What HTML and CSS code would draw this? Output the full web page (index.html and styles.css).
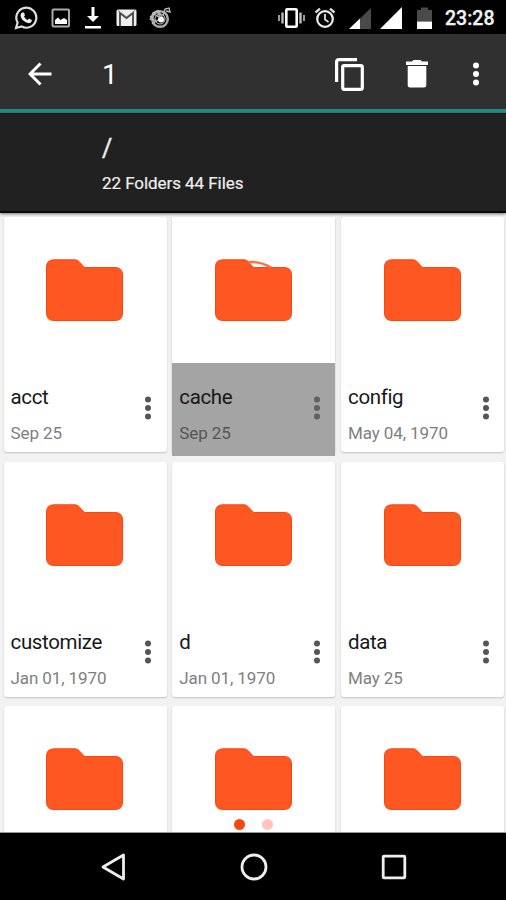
FILE: index.html
```html
<!DOCTYPE html>
<html lang="en">
<head>
<meta charset="utf-8">
<title>Files</title>
<link rel="stylesheet" href="styles.css">
</head>
<body>
<svg class="defs" aria-hidden="true">
  <symbol id="folder" viewBox="0 0 77 62"><path fill="#ff5722" stroke="#fa4710" d="M8 .8H29Q31.500 .8 33 2.500L38.500 8.500H69Q76.500 8.500 76.500 16V54Q76.500 61.500 69 61.500H8Q.5 61.500 .5 54V8Q.5 .8 8 .8Z"/></symbol>
  <symbol id="dots" viewBox="0 0 8 24"><circle cx="4" cy="3.500" r="3"/><circle cx="4" cy="12" r="3"/><circle cx="4" cy="20.500" r="3"/></symbol>
</svg>
<div class="screen">
  <div class="status">
    <div class="notifications">
      <svg width="24" height="24" viewBox="0 0 24 24"><path d="M2 22L3.600 16.600A10 10 0 1 1 7.600 20.500Z" fill="none" stroke="#ddd" stroke-width="2.200"/><path d="M8 6.500L10 6.500L11 9.300L10 10.600Q11.200 13 13.700 14L15 12.600L17.800 14Q17.700 17.200 14.600 17.200Q7.200 15.600 6.500 9.500Q6.500 7.500 8 6.500Z" fill="#eee"/></svg>
      <svg width="20" height="20" viewBox="0 0 20 20"><rect x="1.500" y="1.500" width="16.500" height="17" rx="1" fill="none" stroke="#aaa" stroke-width="2"/><path d="M4 16V12L7 9.500L9.500 12L13 10L16 12V16Z" fill="#fff"/></svg>
      <svg width="18" height="24" viewBox="0 0 18 24"><path d="M7.500 1H10.500V10H15L9 16L3 10H7.500ZM1 20H17V22.500H1Z" fill="#fff"/></svg>
      <svg width="21" height="18" viewBox="0 0 21 18"><rect x=".5" y=".5" width="20" height="16.500" rx="1.500" fill="#eee"/><path d="M4 17V4L10.500 9L17 4V17" fill="none" stroke="#444" stroke-width="1.800"/><path d="M2 1.500L10.500 8L19 1.500" fill="none" stroke="#777"/></svg>
      <svg width="22" height="24" viewBox="0 0 22 24"><circle cx="11" cy="13" r="7.800" fill="none" stroke="#aaa" stroke-width="2.500"/><circle cx="11" cy="13" r="5" fill="none" stroke="#ccc" stroke-width="1"/><circle cx="12" cy="13.500" r="3" fill="#fff"/><path d="M1 14L4 7L11 12M4 7L8 5L11 11M9 4L13 11M14 10L16 3L20 2L21 6L17 5M1 10L7 16M3 18L9 14" fill="none" stroke="#bbb" stroke-width="1.400"/></svg>
    </div>
    <div class="system">
      <svg width="27" height="22" viewBox="0 0 27 22"><rect x="8.300" y="2.300" width="10.400" height="17.400" rx="1" fill="none" stroke="#fff" stroke-width="2.600"/><path d="M4.500 5.500V16.500M22.500 5.500V16.500" stroke="#bbb" stroke-width="2.400"/><path d="M1 8V14M26 8V14" stroke="#999" stroke-width="2"/></svg>
      <svg width="22" height="22" viewBox="0 0 22 22"><circle cx="11" cy="12" r="7.800" fill="none" stroke="#eee" stroke-width="2.200"/><path d="M1.500 5.500L6 1.700M20.500 5.500L16 1.700" stroke="#ddd" stroke-width="2.300"/><path d="M11 7V12.500L14.500 15" fill="none" stroke="#ddd" stroke-width="1.800"/></svg>
      <svg width="22" height="21" viewBox="0 0 22 21"><path d="M0 21L22 0V21Z" fill="#4a4a4a"/><path d="M0 21L11 10.500V21Z" fill="#fff"/></svg>
      <svg width="22" height="22" viewBox="0 0 22 22"><path d="M0 22L22 0V22Z" fill="#fff"/></svg>
      <svg width="15" height="22" viewBox="0 0 15 22"><path d="M0 3H4V.5H11V3H15V14.500H0Z" fill="#4a4a4a"/><path d="M0 14.500H15V22H0Z" fill="#fff"/></svg>
      <span class="clock">23:28</span>
    </div>
  </div>
  <div class="toolbar">
    <svg class="back" width="24" height="24" viewBox="0 0 24 24"><path d="M23.500 12H2M12.500 1.500L2 12L12.500 22.500" fill="none" stroke="#fff" stroke-width="3"/></svg>
    <span class="count">1</span>
    <svg class="copy" width="29" height="33" viewBox="0 0 29 33"><path d="M1.600 24V4Q1.600 1.600 4 1.600H22" fill="none" stroke="#fff" stroke-width="3.200"/><rect x="7.700" y="7.700" width="19.600" height="23.600" rx="1.500" fill="none" stroke="#fff" stroke-width="3.200"/></svg>
    <svg class="trash" width="22" height="28" viewBox="0 0 22 28"><path d="M0 1.500H6L7.500 0H14.500L16 1.500H22V5H0ZM1.700 6H20.300V25Q20.300 27.500 17.800 27.500H4.200Q1.700 27.500 1.700 25Z" fill="#fff"/></svg>
    <svg class="more" width="8" height="24"><use href="#dots"/></svg>
  </div>
  <div class="path"><div class="slash">/</div><div class="summary">22 Folders 44 Files</div></div>
  <div class="files">
    <div class="grid">
      <div class="card"><svg class="folder"><use href="#folder"/></svg><div class="info"><div><div class="name">acct</div><div class="date">Sep 25</div></div><svg class="menu"><use href="#dots"/></svg></div></div>
      <div class="card selected"><svg class="folder" viewBox="0 0 77 62"><use href="#folder"/><path d="M33 3.200Q45 2 56 8.500" fill="none" stroke="#ff7043" stroke-width="2.400"/></svg><div class="info"><div><div class="name">cache</div><div class="date">Sep 25</div></div><svg class="menu"><use href="#dots"/></svg></div></div>
      <div class="card"><svg class="folder"><use href="#folder"/></svg><div class="info"><div><div class="name">config</div><div class="date">May 04, 1970</div></div><svg class="menu"><use href="#dots"/></svg></div></div>
      <div class="card"><svg class="folder"><use href="#folder"/></svg><div class="info"><div><div class="name">customize</div><div class="date">Jan 01, 1970</div></div><svg class="menu"><use href="#dots"/></svg></div></div>
      <div class="card"><svg class="folder"><use href="#folder"/></svg><div class="info"><div><div class="name">d</div><div class="date">Jan 01, 1970</div></div><svg class="menu"><use href="#dots"/></svg></div></div>
      <div class="card"><svg class="folder"><use href="#folder"/></svg><div class="info"><div><div class="name">data</div><div class="date">May 25</div></div><svg class="menu"><use href="#dots"/></svg></div></div>
      <div class="card"><svg class="folder"><use href="#folder"/></svg></div>
      <div class="card"><svg class="folder"><use href="#folder"/></svg></div>
      <div class="card"><svg class="folder"><use href="#folder"/></svg></div>
    </div>
    <div class="pager"><i class="dot on"></i><i class="dot"></i></div>
  </div>
  <div class="nav">
    <svg width="26" height="30" viewBox="0 0 26 30"><path d="M3 15L23.500 3V27Z" fill="none" stroke="#eee" stroke-width="2.800" stroke-linejoin="round"/></svg>
    <svg width="28" height="28" viewBox="0 0 28 28"><circle cx="14" cy="14" r="12" fill="none" stroke="#eee" stroke-width="2.800"/></svg>
    <svg width="26" height="26" viewBox="0 0 26 26"><rect x="2.200" y="2.200" width="21.600" height="21.600" rx=".8" fill="none" stroke="#eee" stroke-width="2.800"/></svg>
  </div>
</div>
</body>
</html>
```
FILE: styles.css
```css
* { box-sizing: border-box; }
body { margin: 0; font-family: Roboto, sans-serif; background: #000; }
svg { display: block; flex: none; }
.defs { display: none; }
.screen { width: 506px; height: 900px; display: flex; flex-direction: column; overflow: hidden; }
.status { height: 34px; flex: none; background: #000; display: flex; justify-content: space-between; align-items: center; padding: 1px 10px 0 14px; }
.notifications { display: flex; align-items: center; gap: 13px; }
.notifications svg:nth-child(4) { margin-left: 1px; }
.notifications svg:nth-child(5) { margin-left: -1px; }
.system { display: flex; align-items: center; }
.system svg:nth-child(1) { margin-right: 1px; }
.system svg:nth-child(2) { margin-left: 8px; }
.system svg:nth-child(3) { margin-left: 13px; margin-top: 1px; }
.system svg:nth-child(4) { margin-left: 9px; }
.system svg:nth-child(5) { margin-left: 15px; }
.clock { margin-left: 13px; margin-top: 2px; width: 51px; color: #f2f2f2; font-size: 19.500px; line-height: 24px; font-weight: 500; white-space: nowrap; -webkit-text-stroke: .3px #f2f2f2; }
.toolbar { height: 79px; flex: none; background: #303030; border-bottom: 4px solid #228d83; display: flex; align-items: center; padding: 5px 26px 0 28px; color: #fff; fill: #fff; }
.count { margin-left: 50px; width: 20px; font-size: 28px; line-height: 32px; padding-top: 1px; }
.copy { margin-left: 212.500px; }
.trash { margin-left: 42.500px; }
.more { margin-left: auto; }
.path { height: 100px; flex: none; background: #212121; border-top: 1px solid #160f10; border-bottom: 2px solid #080808; padding: 20px 0 0 102px; color: #eee; position: relative; z-index: 1; box-shadow: 0 1px 3px rgba(0,0,0,.55); }
.slash { font-size: 25px; line-height: 30px; -webkit-text-stroke: .4px #eee; }
.summary { font-size: 17px; line-height: 22px; margin-top: 8px; white-space: nowrap; letter-spacing: -.06px; -webkit-text-stroke: .2px #eee; }
.files { height: 620px; flex: none; background: #f2f2f2; overflow: hidden; position: relative; border-bottom: 1px solid #999; padding: 4px 0 0 3.500px; }
.grid { display: grid; grid-template-columns: repeat(3, 163px); grid-auto-rows: 235px; gap: 9.700px 5.750px; }
.card { background: #fff; border-radius: 3px; box-shadow: 0 1px 2px rgba(0,0,0,.2); padding-top: 42px; }
.folder { width: 77px; height: 62px; margin-left: 42.500px; }
.info { height: 93px; margin-top: 42px; padding: 0 14.500px 0 7px; display: flex; justify-content: space-between; }
.name { font-size: 20.500px; line-height: 26px; margin-top: 21px; color: #181818; letter-spacing: -.35px; }
.date { font-size: 17px; line-height: 22px; margin-top: 12px; color: #808080; white-space: nowrap; letter-spacing: -.1px; }
.menu { width: 8px; height: 24px; margin-top: 32.500px; fill: #555; }
.selected { border-radius: 0; }
.selected .info { background: #a4a4a4; }
.selected .date { color: #555; }
.selected .menu { fill: #606060; }
.pager { position: absolute; left: 234px; bottom: 2px; display: flex; gap: 17px; }
.dot { width: 11px; height: 11px; border-radius: 50%; background: #ffc5bb; }
.dot.on { background: #f84812; }
.nav { height: 67px; flex: none; background: #000; display: flex; align-items: center; justify-content: space-between; padding: 0 99px 0 100px; }
```
